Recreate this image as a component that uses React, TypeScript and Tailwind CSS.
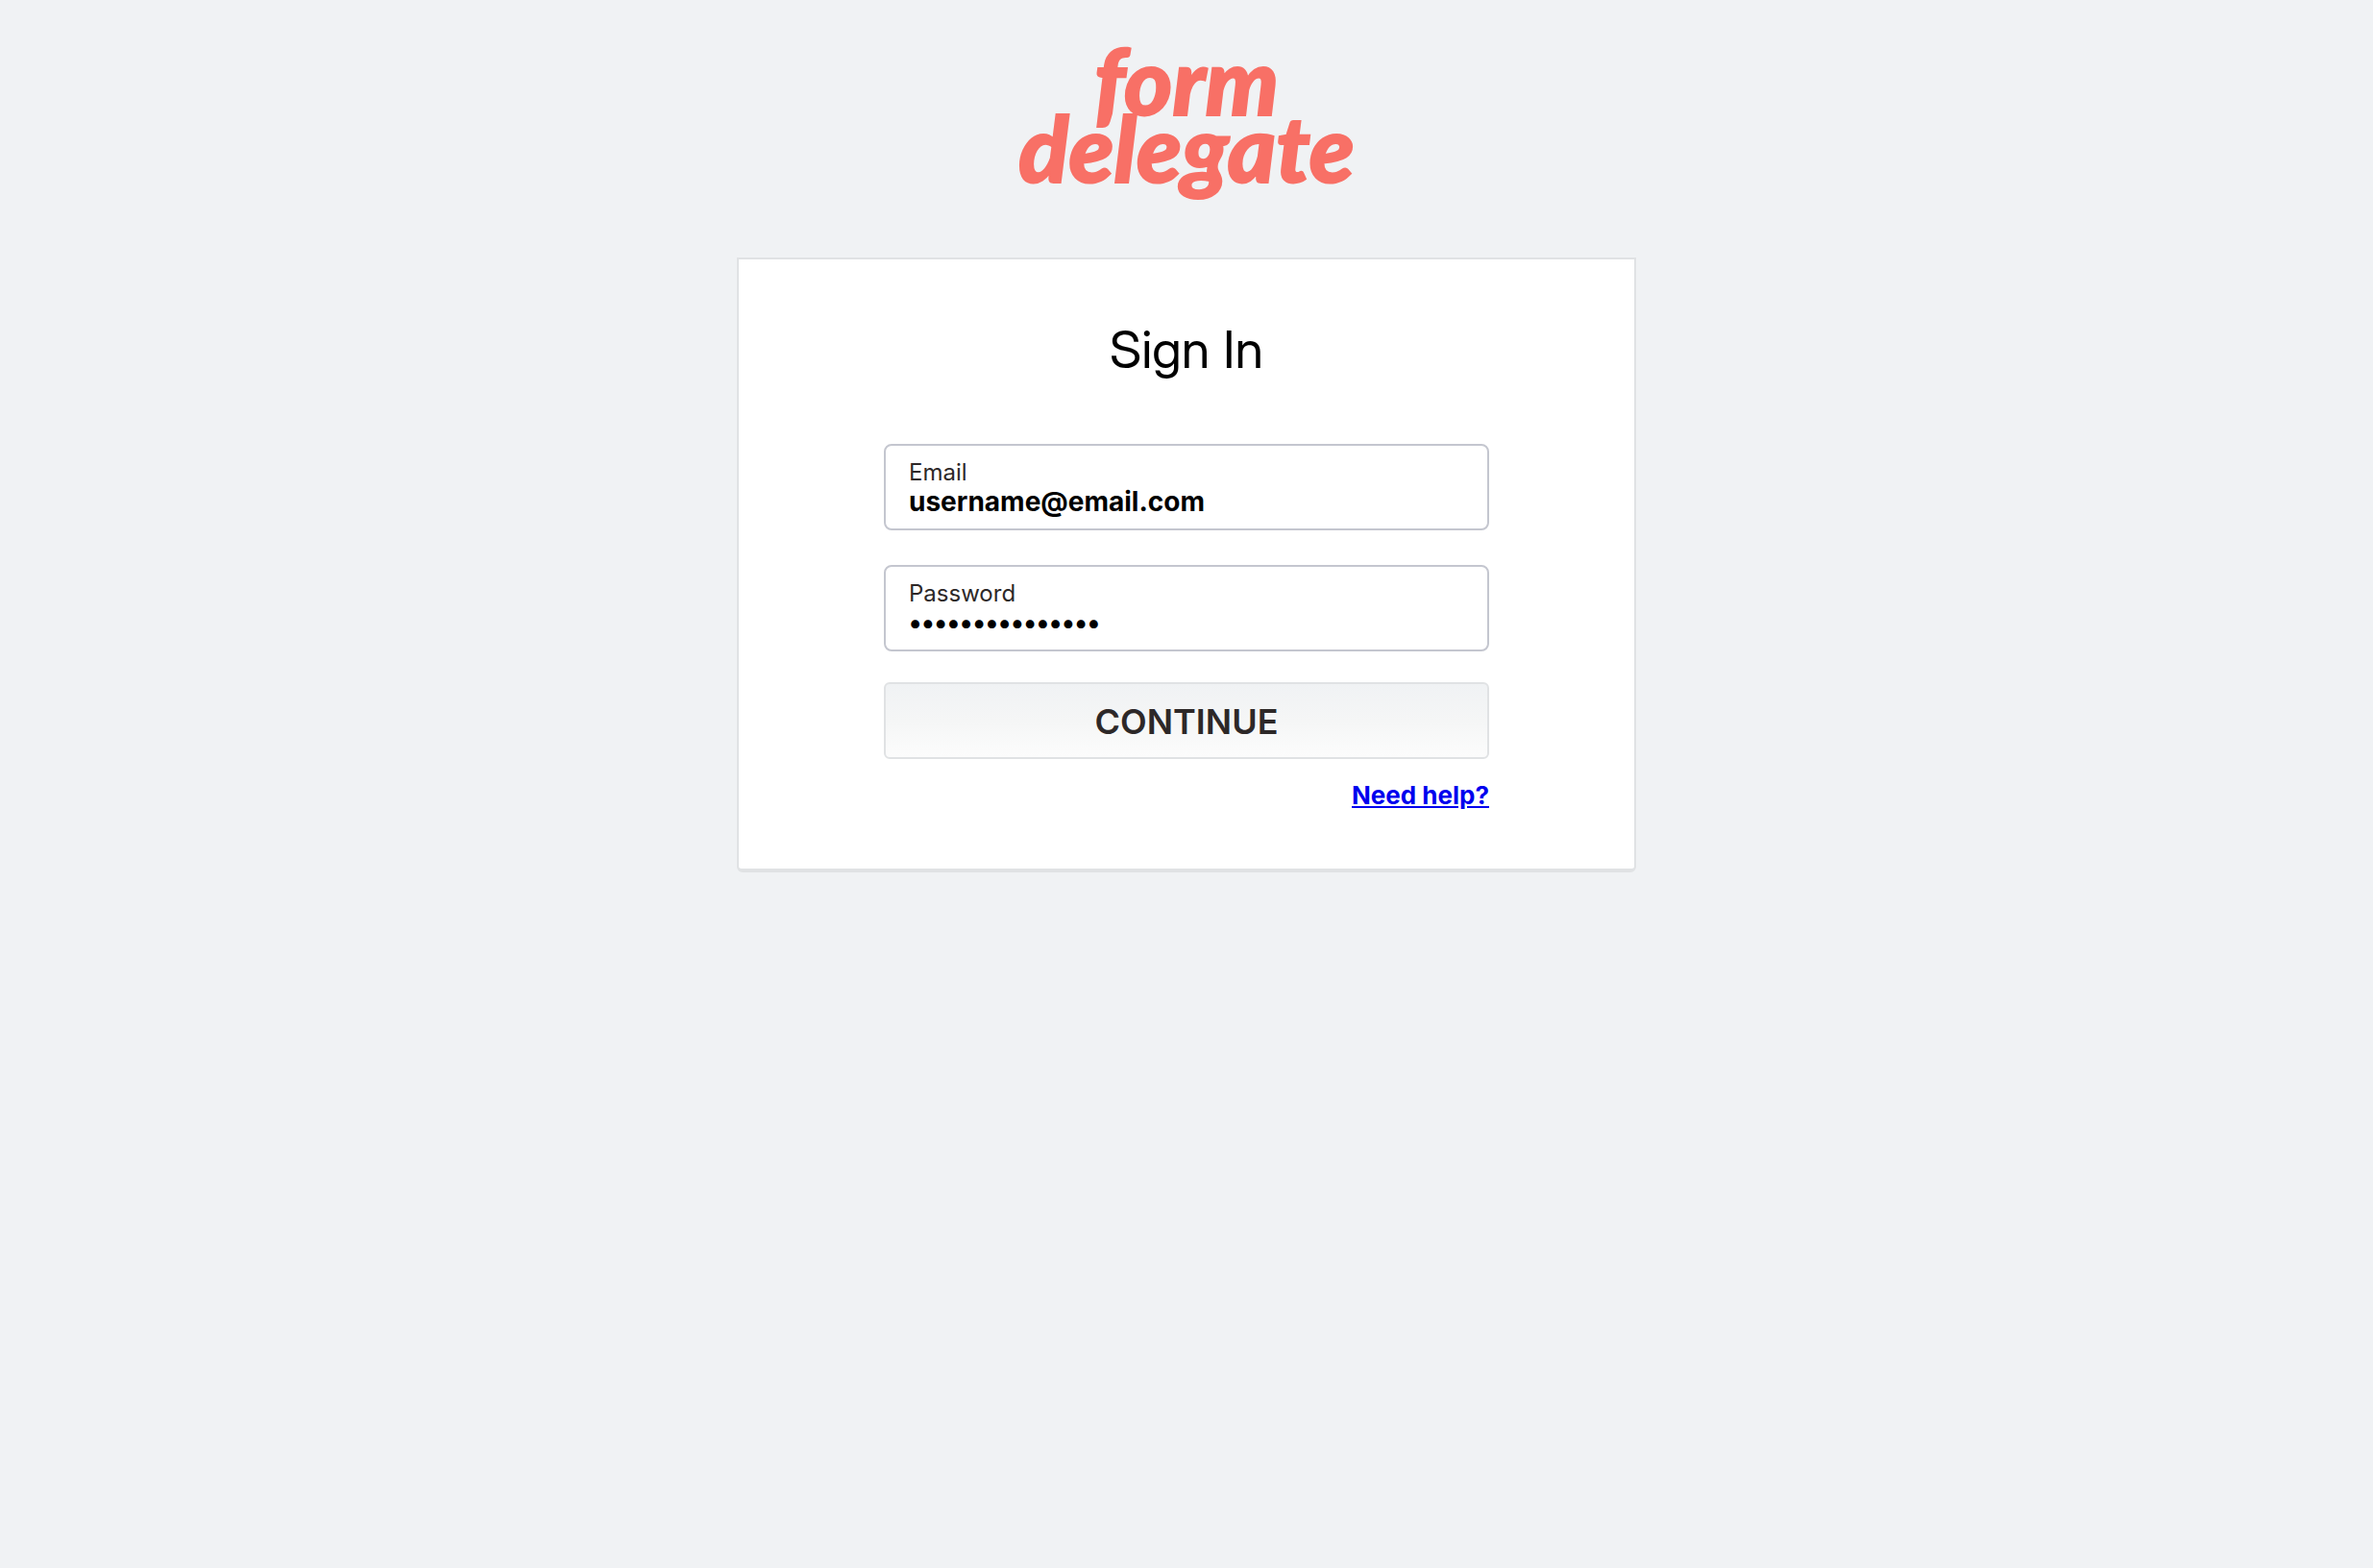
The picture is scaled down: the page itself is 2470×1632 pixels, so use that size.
import { useState } from "react";

function Logo() {
  return (
    <div
      role="img"
      aria-label="form delegate"
      className="text-center font-['Lato_Black','Lato',sans-serif] text-[96px] leading-[70px] font-black text-[#f87066] italic [-webkit-text-stroke:2px_#f87066]"
    >
      <div>form</div>
      <div>delegate</div>
    </div>
  );
}

type FieldProps = {
  id: string;
  label: string;
  type: string;
  value: string;
  onChange: (value: string) => void;
};

function Field({ id, label, type, value, onChange }: FieldProps) {
  return (
    <div className="flex flex-col rounded-lg border-2 border-[#c4c6cf] px-6 pt-3.5 pb-3">
      <label htmlFor={id} className="text-2xl leading-7 text-[#2d2828]">
        {label}
      </label>
      <input
        id={id}
        type={type}
        value={value}
        onChange={(e) => onChange(e.target.value)}
        className="h-8 w-full bg-transparent text-[28px] leading-8 font-bold text-black outline-none"
      />
    </div>
  );
}

export default function App() {
  const [email, setEmail] = useState("username@email.com");
  const [password, setPassword] = useState("correcthorse123");

  return (
    <main className="flex min-h-screen flex-col items-center bg-[#f0f2f4] px-6 pt-12 font-['Inter',sans-serif]">
      <Logo />
      <form
        onSubmit={(e) => e.preventDefault()}
        className="mt-20 w-full max-w-[936px] rounded-b-md border-2 border-b-4 border-[#e0e2e4] bg-white px-6 pt-[62px] pb-[60px]"
      >
        <div className="mx-auto flex w-full max-w-[630px] flex-col">
          <h1 className="mb-[66px] text-center font-['Inter_Display','Inter',sans-serif] text-[54px] leading-[64px] font-normal text-black">
            Sign In
          </h1>
          <div className="flex flex-col gap-9">
            <Field id="email" label="Email" type="email" value={email} onChange={setEmail} />
            <Field id="password" label="Password" type="password" value={password} onChange={setPassword} />
          </div>
          <button
            type="submit"
            className="mt-8 h-20 rounded-md border-2 border-[#e0e2e4] bg-linear-to-b from-[#f0f2f4] via-[#f5f6f6] to-[#fcfcfc] pt-0.5 text-4xl font-semibold text-[#2d2828]"
          >
            CONTINUE
          </button>
          <a href="#help" className="mt-[22px] self-end text-[26px] leading-8 font-bold text-[#0000ee] underline">
            Need help?
          </a>
        </div>
      </form>
    </main>
  );
}
